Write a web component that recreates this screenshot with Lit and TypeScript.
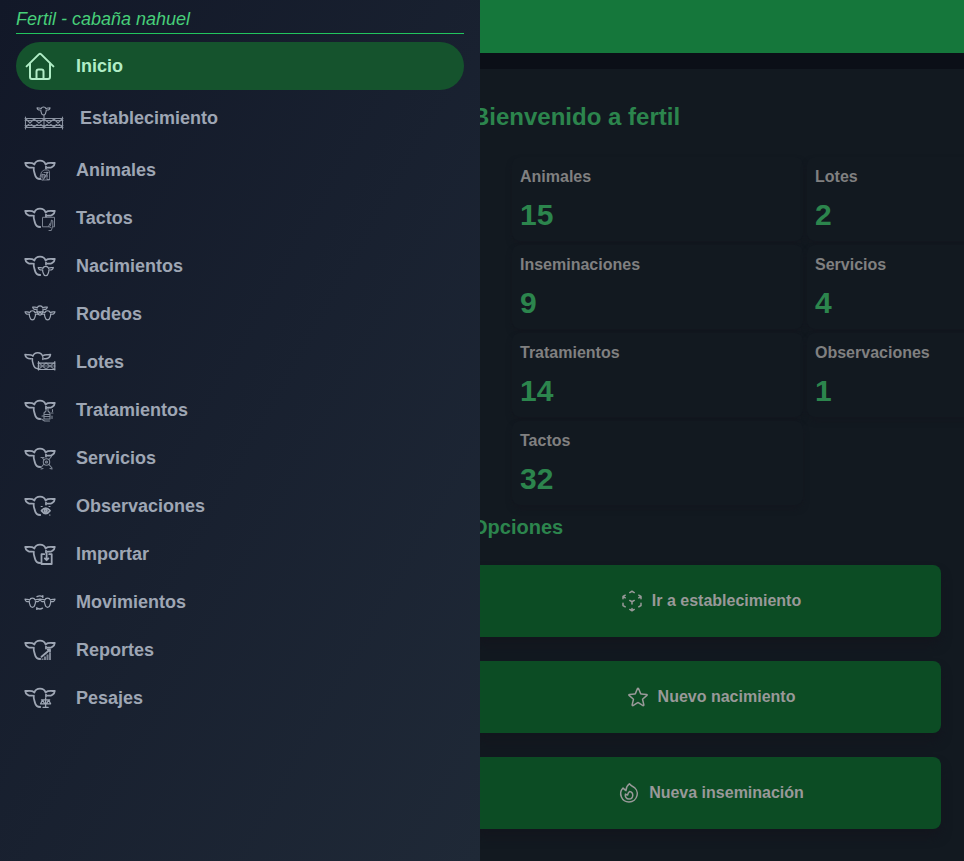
import { LitElement, html, svg, css } from "lit";
import { customElement } from "lit/decorators.js";
import { classMap } from "lit/directives/class-map.js";

const cowTop = svg`
  <path d="M10.4 10.6C11.2 8 13.400 6.700 16 6.700s4.800 1.300 5.600 3.900" />
  <path d="M10 10C7.500 8.200 4.500 9.400 1.200 8.800 1.600 12.200 4.600 14.200 8.400 13.600" />
  <path d="M22 10C24.500 8.200 27.500 9.400 30.800 8.800 30.400 12.200 27.400 14.200 23.600 13.600" />`;
const cow = svg`
  ${cowTop}
  <path d="M9.800 13.600C9.400 15.600 9.800 17.400 10.600 19.400c.8 2 .4 5.600 5.600 5.600" />
  <path d="M22 12.600v2" />`;
const wholeCow = svg`
  ${cowTop}
  <path d="M10 13.600C9.600 15.600 9.800 17 10.800 19c.8 2 .4 6 5.200 6s4.400-4 5.200-6c1-2 1.200-3.400.8-5.400" />`;

const icons: Record<string, unknown> = {
  home: svg`<g stroke-width="2"><path d="M2.600 16.400 14.800 4.400a1.700 1.700 0 0 1 2.400 0L29.400 16.400" />
    <path d="M6 13.500V27a2 2 0 0 0 2 2h16a2 2 0 0 0 2-2V13.500" />
    <path d="M12.500 29v-7.500a2 2 0 0 1 2-2h3a2 2 0 0 1 2 2V29" /></g>`,
  ranch: svg`<g transform="translate(12.500 6) scale(.44)" stroke-width="2.400">${wholeCow}</g>
    <g stroke-width="1.100" opacity=".85">
    <path d="M1.500 19v12M38.500 19v12M20 17v13.500M1 20.500h38M1 22.500h38M1 27.500h38M1 29.500h38" />
    <path d="M2 21l8 8 10-8M2 29l8-8 10 8M20 21l10 8 8-8M20 29l10-8 8 8" /></g>`,
  animals: svg`${cow}<g stroke-width=".9" opacity=".75"><path d="M18 17.500l2-1.500h4.500l1 1.500v8.500h-8l-1.500-3 1-3.500ZM18 20v4h3v-3.500h-3M23 18v7.500h2M19 26l5-8M16.500 22h7M20 18.500h4" /></g>`,
  touch: svg`${cow}<g stroke-width="1" opacity=".75"><path d="M25 24.800h-6.500V15.300h12V24.800h-1" />
    <path d="M26.500 23.500l1-5.500 1.300.8v5.200l-1.500 4.500h-2.300M26 21.500l-1.500 3 2.500 1" /></g>`,
  births: svg`${cow}<g transform="translate(13.600 13) scale(.51)" stroke-width="2.400">${wholeCow}</g>`,
  herds: svg`<g stroke-width="2.400"><g transform="translate(.4 9.400) scale(.5)">${wholeCow}</g>
    <g transform="translate(15.600 9.400) scale(.5)">${wholeCow}</g>
    <g transform="translate(8 4.600) scale(.5)">${wholeCow}</g></g>`,
  lots: svg`<g transform="translate(0 1) scale(.86)">${cow}</g>
    <g stroke-width="1.200"><path d="M14.500 15.500v8.500M30.800 15.500v8.500M14 17.200h17M14 23.500h17" />
    <path opacity=".7" d="M14 20h17M15 17l7 6 8-6M15 23l7-6 8 6" /></g>`,
  treatments: svg`${cow}<g stroke-width="1.100" opacity=".8"><path d="M22 14.500v2.500l-2 2v6h6v-6l-2-2v-2.500M20.500 20.500h5M20.500 22.500h5M18 22h2M17.500 25l3 2h5M28.500 15.500v2M27.500 19h1.500M28 22v2.500" /></g>`,
  services: svg`${cow}<g stroke-width="1.100" opacity=".8"><circle cx="22.500" cy="20" r="3.200" /><circle cx="22.500" cy="20" r="1" />
    <path d="M17 15.500h3M18.500 16l1.500 2M25 17.500l2.500-3M19.500 22.500l-2.500 3M25 22.500l3 3.500M19 26.500l-2 .5M26 26.500l2 .5" /></g>`,
  notes: svg`${cow}<path d="M17.500 20.800c2.500-3.600 6-3.600 8.500 0-2.500 3.600-6 3.600-8.500 0Z" /><circle cx="21.700" cy="20.800" r="1.300" />
    <path stroke-width="1.200" d="M17.200 16.500h1M25 16.500h1M25.500 25h.5" />`,
  import: svg`${cow}<path d="M20.200 16.200h-2.700v9.800h10.200v-9.800H25.200M22.600 14.800v7.200M20.800 20.400l1.800 1.800 1.800-1.800" />`,
  moves: svg`<g stroke-width="2.400"><g transform="translate(.4 8.800) scale(.5)">${wholeCow}</g>
    <g transform="translate(15.600 8.800) scale(.5)">${wholeCow}</g></g>
    <path stroke-width="1.400" d="M13 10.600c2-1 4-1 5.500.2M18.800 9.800v1.600M13 22.200c2 1 4 1 5.500 0M12.800 23.400v-1.600" />`,
  reports: svg`${cow}<path d="M17.500 22.800l8-6.800M23.800 15.500h2.200v2" />
    <path stroke-width="2" stroke-linecap="butt" opacity=".75" d="M18.500 26v-1.500M21 26v-3.500M23.500 26v-5.500M26 26v-7.500" />`,
  weights: svg`${cow}<g stroke-width="1.300"><path d="M21.600 16v9M19 25.300h5.200M17.500 17.800h8.200M18.600 18l-2 3.800h4ZM24.600 18l-2 3.800h4Z" /></g>`,
  cube: svg`<path d="m21 7.500-2.250-1.313M21 7.500v2.250m0-2.250-2.250 1.313M3 7.500l2.250-1.313M3 7.500l2.250 1.313M3 7.500v2.250m9 3 2.250-1.313M12 12.750l-2.250-1.313M12 12.750V15m0 6.750 2.250-1.313M12 21.750V19.500m0 2.250-2.250-1.313m0-16.875L12 2.250l2.250 1.313M21 14.250v2.250l-2.250 1.313m-13.500 0L3 16.500v-2.250" />`,
  star: svg`<path d="M11.480 3.499a.562.562 0 0 1 1.040 0l2.125 5.111a.563.563 0 0 0 .475.345l5.518.442c.499.040.701.663.321.988l-4.204 3.602a.563.563 0 0 0-.182.557l1.285 5.385a.562.562 0 0 1-.840.610l-4.725-2.885a.562.562 0 0 0-.586 0L6.982 20.540a.562.562 0 0 1-.840-.610l1.285-5.386a.562.562 0 0 0-.182-.557l-4.204-3.602a.562.562 0 0 1 .321-.988l5.518-.442a.563.563 0 0 0 .475-.345L11.480 3.500Z" />`,
  fire: svg`<path d="M15.362 5.214A8.252 8.252 0 0 1 12 21 8.250 8.250 0 0 1 6.038 7.047 8.287 8.287 0 0 0 9 9.601a8.983 8.983 0 0 1 3.361-6.867 8.210 8.210 0 0 0 3 2.480Z" />
    <path d="M12 18a3.750 3.750 0 0 0 .495-7.468 5.990 5.990 0 0 0-1.925 3.547 5.975 5.975 0 0 1-2.133-1.001A3.750 3.750 0 0 0 12 18Z" />`,
};

const links = [
  ["Inicio", "home"],
  ["Establecimiento", "ranch"],
  ["Animales", "animals"],
  ["Tactos", "touch"],
  ["Nacimientos", "births"],
  ["Rodeos", "herds"],
  ["Lotes", "lots"],
  ["Tratamientos", "treatments"],
  ["Servicios", "services"],
  ["Observaciones", "notes"],
  ["Importar", "import"],
  ["Movimientos", "moves"],
  ["Reportes", "reports"],
  ["Pesajes", "weights"],
];

const stats: [string, number][] = [
  ["Animales", 15],
  ["Lotes", 2],
  ["Inseminaciones", 9],
  ["Servicios", 4],
  ["Tratamientos", 14],
  ["Observaciones", 1],
  ["Tactos", 32],
];

const actions = [
  ["Ir a establecimiento", "cube"],
  ["Nuevo nacimiento", "star"],
  ["Nueva inseminación", "fire"],
];

@customElement("app-drawer")
export class AppDrawer extends LitElement {
  static styles = css`
    :host {
      display: block;
      box-sizing: border-box;
      padding: 5px 16px 16px;
      background: linear-gradient(to bottom right, #121828, #1f2937);
      color: #9ea6b4;
    }
    .title {
      margin: 0 0 8px;
      border-bottom: 1px solid #22c55e;
      font-size: 18px;
      line-height: 28px;
      font-weight: 400;
      font-style: italic;
      color: #47cf79;
    }
    .list {
      margin: 0;
      padding: 0;
      list-style: none;
    }
    .link {
      display: flex;
      align-items: center;
      gap: 20px;
      padding: 8px;
      border-radius: 24px;
      color: inherit;
      font-size: 18px;
      line-height: 28px;
      font-weight: 700;
      text-decoration: none;
    }
    .active {
      background: #15532d;
      color: #b0edc6;
    }
    .wide {
      gap: 16px;
    }
    .icon {
      width: 32px;
      height: 32px;
      fill: none;
      stroke: currentColor;
      stroke-width: 1.8;
      stroke-linecap: round;
      stroke-linejoin: round;
    }
    .wide .icon {
      width: 40px;
      height: 40px;
    }
  `;

  render() {
    return html`
      <h2 class="title">Fertil - cabaña nahuel</h2>
      <nav>
        <ul class="list">
          ${links.map(
            ([label, icon], i) => html`<li>
              <a class=${classMap({ link: true, active: i === 0, wide: icon === "ranch" })} href="#${icon}">
                <svg class="icon" viewBox=${icon === "ranch" ? "0 0 40 40" : "0 0 32 32"} aria-hidden="true">${icons[icon]}</svg>
                <span>${label}</span>
              </a>
            </li>`
          )}
        </ul>
      </nav>
    `;
  }
}

@customElement("app-root")
export class AppRoot extends LitElement {
  static styles = css`
    :host {
      display: block;
      position: relative;
      min-height: 100vh;
      overflow: hidden;
      background: #0b0f17;
      font-family: "Liberation Sans", Arial, sans-serif;
    }
    .bar {
      height: 53px;
      background: #15773b;
    }
    .page {
      display: grid;
      grid-template-columns: minmax(0, 456px) minmax(0, 1fr);
      margin-top: 16px;
    }
    .card {
      grid-column: 2;
      padding: 32px 16px;
      background: #121920;
    }
    .heading {
      margin: 0;
      font-size: 24px;
      line-height: 32px;
      color: #2c854d;
    }
    .stats {
      display: grid;
      grid-template-columns: repeat(2, 291px);
      gap: 4px;
      margin: 24px 0 8px;
      padding-left: 40px;
    }
    .stat {
      padding: 8px;
      border-radius: 8px;
      background: #121920;
      box-shadow: 0 4px 6px -1px #13161e;
    }
    .name {
      font-size: 16px;
      line-height: 24px;
      font-weight: 700;
      color: #808080;
    }
    .value {
      margin: 8px 0 0;
      font-size: 30px;
      line-height: 36px;
      font-weight: 700;
      color: #2c854d;
    }
    .sub {
      font-size: 20px;
      line-height: 28px;
    }
    .actions {
      display: grid;
      gap: 24px;
      margin-top: 24px;
      padding-right: 7px;
    }
    .action {
      display: flex;
      align-items: center;
      justify-content: center;
      gap: 8px;
      height: 72px;
      padding: 0 0 0 8px;
      border: 0;
      border-radius: 8px;
      background: #0c4c24;
      box-shadow: 0 8px 12px -2px #13151d;
      color: #999;
      font: 700 16px/24px "Liberation Sans", Arial, sans-serif;
    }
    .icon {
      width: 24px;
      height: 24px;
      fill: none;
      stroke: currentColor;
      stroke-width: 1.5;
      stroke-linecap: round;
      stroke-linejoin: round;
    }
    .drawer {
      position: absolute;
      inset: 0 auto 0 0;
      width: 480px;
      max-width: 100%;
    }
  `;

  render() {
    return html`
      <header class="bar"></header>
      <div class="page">
        <main class="card">
          <h1 class="heading">Bienvenido a fertil</h1>
          <dl class="stats">
            ${stats.map(
              ([name, value]) => html`<div class="stat">
                <dt class="name">${name}</dt>
                <dd class="value">${value}</dd>
              </div>`
            )}
          </dl>
          <h2 class="heading sub">Opciones</h2>
          <div class="actions">
            ${actions.map(
              ([label, icon]) => html`<button class="action" type="button">
                <svg class="icon" viewBox="0 0 24 24" aria-hidden="true">${icons[icon]}</svg>
                <span>${label}</span>
              </button>`
            )}
          </div>
        </main>
      </div>
      <app-drawer class="drawer"></app-drawer>
    `;
  }
}
